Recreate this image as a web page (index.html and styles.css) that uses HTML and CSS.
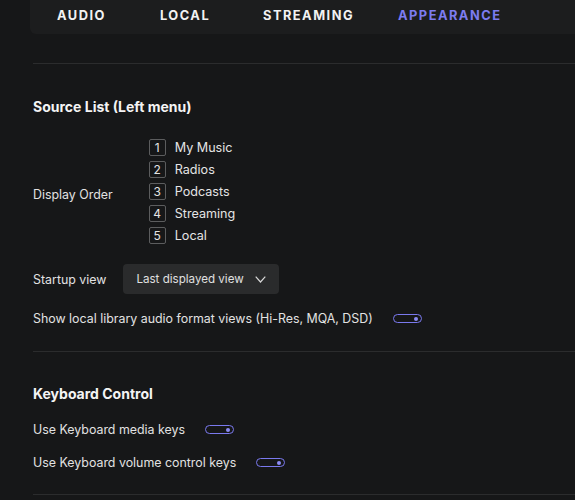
FILE: index.html
```html
<!DOCTYPE html>
<html>
<head>
    <meta charset="UTF-8">
    <title>Settings</title>
    <link rel="stylesheet" href="styles.css">
</head>
<body>
    <div class="page">
        <ul class="tabs">
            <li class="tab-audio">AUDIO</li>
            <li class="tab-local">LOCAL</li>
            <li class="tab-streaming">STREAMING</li>
            <li class="tab-appearance active">APPEARANCE</li>
        </ul>

        <div class="section">
            <h2 class="title">Source List (Left menu)</h2>
            <div class="row row-order">
                <span class="label">Display Order</span>
                <ol class="order">
                    <li><span class="num">1</span>My Music</li>
                    <li><span class="num">2</span>Radios</li>
                    <li><span class="num">3</span>Podcasts</li>
                    <li><span class="num">4</span>Streaming</li>
                    <li><span class="num">5</span>Local</li>
                </ol>
            </div>
            <div class="row row-startup">
                <span class="label">Startup view</span>
                <div class="select">
                    Last displayed view
                    <svg width="11" height="7" viewBox="0 0 11 7"><path d="M0.7 0.7 L5.5 6 L10.3 0.7" fill="none" stroke="#d8d8d8" stroke-width="1.2"/></svg>
                </div>
            </div>
            <div class="row row-format">
                <span class="label">Show local library audio format views (Hi-Res, MQA, DSD)</span>
                <span class="toggle"></span>
            </div>
        </div>

        <div class="section section-keys">
            <h2 class="title">Keyboard Control</h2>
            <div class="row row-media">
                <span class="label">Use Keyboard media keys</span>
                <span class="toggle"></span>
            </div>
            <div class="row row-volume">
                <span class="label">Use Keyboard volume control keys</span>
                <span class="toggle"></span>
            </div>
        </div>
    </div>
</body>
</html>
```

FILE: styles.css
```css
body{margin:0;font-family:Inter, "Noto Sans", sans-serif;background-color:#161718;color:#e2e2e2;}
h2,p{margin:0;}
ul,ol,li{margin:0;padding:0;list-style:none;}

html, body{
    height: 100%;
    overflow: hidden;
}

.page{
    padding-left: 33px;
}

/* 顶部标签栏 */
.tabs{
    display: flex;
    height: 34px;
    margin-left: -3px;
    padding-left: 27px;
    padding-bottom: 4px;
    box-sizing: border-box;
    align-items: center;
    background-color: #1c1d1e;
    border-bottom-left-radius: 6px;
    font-size: 12.8px;
    font-weight: 700;
    letter-spacing: 1.5px;
    color: #f2f2f2;
    white-space: nowrap;
}
.tabs li{
    flex-shrink: 0;
}
.tabs .tab-audio,
.tabs .tab-local{
    width: 103px;
}
.tabs .tab-streaming{
    width: 135px;
}
.tabs li.active{
    color: #7d7cf0;
}

.section{
    margin-top: 29px;
    border-top: 1px solid #2b2c2d;
    padding-top: 34px;
    padding-bottom: 25px;
}
.section-keys{
    margin-top: 0;
    padding-top: 33px;
    padding-bottom: 24px;
    border-bottom: 1px solid #2b2c2d;
}

.title{
    font-size: 14px;
    font-weight: 700;
    color: #f4f4f4;
    line-height: 18px;
    margin-bottom: 20px;
}
.section-keys .title{
    margin-bottom: 19px;
}

.row{
    display: flex;
    align-items: center;
    font-size: 12.4px;
}
.row-order .label{
    padding-top: 6px;
}

.order{
    margin-left: 36px;
}
.order li{
    display: flex;
    align-items: center;
    height: 22px;
    font-size: 12.6px;
    color: #e4e4e4;
}
.order .num{
    display: flex;
    align-items: center;
    justify-content: center;
    width: 15px;
    height: 15px;
    margin-right: 9px;
    border: 1px solid #5c5d5e;
    border-radius: 2px;
    font-size: 12px;
}

.row-startup{
    margin-top: 18px;
}
.select{
    display: flex;
    align-items: center;
    height: 30px;
    margin-left: 17px;
    padding: 0 13px;
    background-color: #2a2b2c;
    border-radius: 4px;
    font-size: 11.6px;
    color: #e0e0e0;
}
.select svg{
    margin-left: 11px;
}

.row-format{
    margin-top: 17px;
}
.row-volume{
    margin-top: 18px;
}

.toggle{
    position: relative;
    width: 27px;
    height: 7px;
    margin-left: 20px;
    border: 1.5px solid #7a79ee;
    border-radius: 6px;
}
.toggle::after{
    content: "";
    position: absolute;
    right: 3px;
    top: 1.5px;
    width: 4px;
    height: 4px;
    border-radius: 50%;
    background-color: #8c8bf4;
}
```
